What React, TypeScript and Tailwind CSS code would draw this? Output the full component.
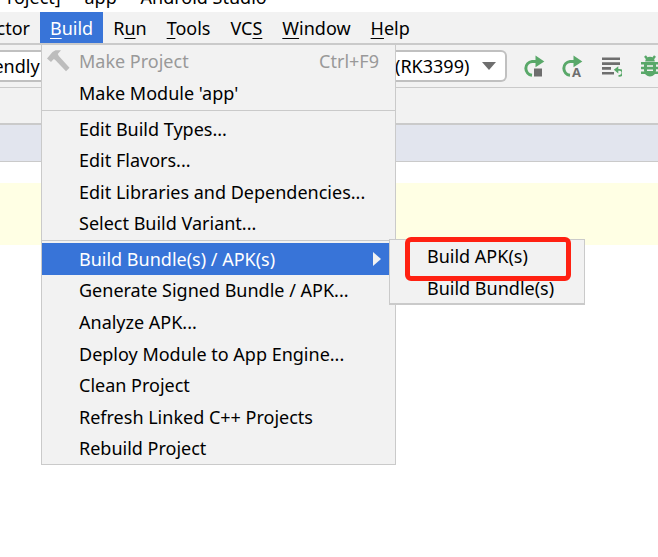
import { clsx } from 'clsx';

type MenuEntry = {
  label: string;
  shortcut?: string;
  disabled?: boolean;
  submenu?: string[];
};

const titleParts = ['Project]', '-', 'app', '-', 'Android Studio'];

const menuGroups: { height: string; entries: MenuEntry[] }[] = [
  {
    height: 'h-16 mb-px',
    entries: [
      { label: 'Make Project', shortcut: 'Ctrl+F9', disabled: true },
      { label: "Make Module 'app'" },
    ],
  },
  {
    height: 'h-[126px] mb-px',
    entries: [
      { label: 'Edit Build Types...' },
      { label: 'Edit Flavors...' },
      { label: 'Edit Libraries and Dependencies...' },
      { label: 'Select Build Variant...' },
    ],
  },
  {
    height: 'h-[221px]',
    entries: [
      { label: 'Build Bundle(s) / APK(s)', submenu: ['Build APK(s)', 'Build Bundle(s)'] },
      { label: 'Generate Signed Bundle / APK...' },
      { label: 'Analyze APK...' },
      { label: 'Deploy Module to App Engine...' },
      { label: 'Clean Project' },
      { label: 'Refresh Linked C++ Projects' },
      { label: 'Rebuild Project' },
    ],
  },
];

function HammerIcon() {
  return (
    <svg className="w-6 h-6" viewBox="0 0 24 24" fill="#bdbdbd" aria-hidden="true">
      <path d="M1 9.5 6.5 3 9.5 1.2H15L11.8 5l1 2L23.5 18.8 20 22.3 8.8 10.5 7.5 10.2 5 13Z" />
    </svg>
  );
}

function RerunArrow() {
  return (
    <>
      <path d="M8 20.3A7 7 0 0 1 8 6.4H12" fill="none" stroke="#59a869" strokeWidth="3" />
      <path d="M11.5.5 20.3 6.4 11.5 12.3Z" fill="#59a869" />
    </>
  );
}

function RestartIcon() {
  return (
    <svg className="w-[22px] h-[22px]" viewBox="0 0 22 22" aria-hidden="true">
      <RerunArrow />
      <path d="M10 13.5h8v8h-8z" fill="#6e6e6e" />
    </svg>
  );
}

function ApplyChangesIcon() {
  return (
    <svg className="w-[22px] h-[22px]" viewBox="0 0 22 22" aria-hidden="true">
      <RerunArrow />
      <text x="10" y="21.5" fontSize="13" fontWeight="700" fill="#6e6e6e" className="font-['Open_Sans',sans-serif]">
        A
      </text>
    </svg>
  );
}

function ApplyCodeIcon() {
  return (
    <svg className="w-[22px] h-[22px]" viewBox="0 0 22 22" aria-hidden="true">
      <path d="M2 2.5h18v2.6H2zM2 7.3h18v2.6H2zM2 12.1h9v2.6H2zM2 16.9h12v2.6H2z" fill="#6e6e6e" />
      <path d="M17 14.8h2.5a3 3 0 0 1 0 6h-1" fill="none" stroke="#59a869" strokeWidth="1.8" />
      <path d="M13.8 14.8 18.3 11.2V18.4Z" fill="#59a869" />
    </svg>
  );
}

function BugIcon() {
  return (
    <svg className="w-[22px] h-[22px]" viewBox="0 0 22 22" aria-hidden="true">
      <path
        d="M7 1 10 5M17 1 14 5M3 8.2H21M3 13H21M3 17.8H21"
        fill="none"
        stroke="#59a869"
        strokeWidth="2.4"
      />
      <path d="M7.2 6.6a4.8 4.8 0 0 1 9.6 0ZM6 8.2h12v7.3a6 6 0 0 1-12 0Z" fill="#59a869" />
      <path d="M9 11h6M9 15.2h6" stroke="#f2f2f2" strokeWidth="1.6" />
    </svg>
  );
}

function Submenu({ items }: { items: string[] }) {
  return (
    <div
      role="menu"
      className="absolute z-20 -top-1 left-[347px] w-[196px] h-[66px] border border-[#cacaca] border-b-2 bg-[#f2f2f2] text-black"
    >
      {items.map((item) => (
        <button key={item} role="menuitem" className="flex items-center w-full h-8 pl-[37px] text-left">
          {item}
        </button>
      ))}
      <div className="absolute -top-[3px] left-[15px] w-[166px] h-11 rounded-md border-5 border-[#ff2112] pointer-events-none" />
    </div>
  );
}

function BuildMenu() {
  return (
    <div
      role="menu"
      className="absolute z-10 left-px top-[33px] w-[355px] border border-t-0 border-[#cacaca] bg-[#f2f2f2]"
    >
      {menuGroups.map((group, i) => (
        <div key={i}>
          {i > 0 && <hr className="border-[#cacaca]" />}
          <div className={clsx('flex flex-col', i > 0 && 'mt-0.5', group.height)}>
            {group.entries.map((entry) => (
              <div key={entry.label} className="relative flex-1 flex">
                <button
                  role="menuitem"
                  disabled={entry.disabled}
                  className={clsx(
                    'flex flex-1 items-center pl-1 pr-4 text-left',
                    entry.disabled && 'text-[#999999]',
                    entry.submenu && 'bg-[#3874d8] text-white'
                  )}
                >
                  <span className="w-[33px]">{entry.disabled && <HammerIcon />}</span>
                  <span className="flex-1">{entry.label}</span>
                  {entry.shortcut && <span>{entry.shortcut}</span>}
                  {entry.submenu && (
                    <svg className="w-2 h-3.5 -mr-0.5" viewBox="0 0 8 14" fill="#f2f2f2" aria-hidden="true">
                      <path d="M0 0 8 7 0 14Z" />
                    </svg>
                  )}
                </button>
                {entry.submenu && <Submenu items={entry.submenu} />}
              </div>
            ))}
          </div>
        </div>
      ))}
    </div>
  );
}

function MenuButton({ before = '', mnemonic = '', after = '', active = false }: {
  before?: string;
  mnemonic?: string;
  after?: string;
  active?: boolean;
}) {
  return (
    <button className={clsx('h-[31px] px-2.5', active && 'bg-[#3874d8] text-white')}>
      {before}
      <span className="underline underline-offset-3">{mnemonic}</span>
      {after}
    </button>
  );
}

export default function App() {
  return (
    <div className="min-h-screen overflow-hidden bg-white text-black text-lg leading-6 font-['Noto_Sans','Open_Sans',sans-serif]">
      <header className="h-3 flex items-end overflow-hidden whitespace-nowrap">
        <h1 className="flex gap-[9px] -ml-1 mb-[3px]">
          {titleParts.map((part, i) => (
            <span key={i}>{part}</span>
          ))}
        </h1>
      </header>

      <nav className="flex h-[33px] bg-[#f2f2f2] border-b-2 border-[#cacaca]">
        <div className="flex w-10 justify-end">
          <MenuButton before="Refactor" />
        </div>
        <div className="relative">
          <MenuButton mnemonic="B" after="uild" active />
          <BuildMenu />
        </div>
        <MenuButton before="R" mnemonic="u" after="n" />
        <MenuButton mnemonic="T" after="ools" />
        <MenuButton before="VC" mnemonic="S" />
        <MenuButton mnemonic="W" after="indow" />
        <MenuButton mnemonic="H" after="elp" />
      </nav>

      <div className="flex items-center h-[43px] bg-[#f2f2f2] border-b border-[#cacaca]">
        <div className="flex w-[507px] h-8 justify-end shrink-0">
          <select
            aria-label="Device"
            className="appearance-none h-8 w-[407px] -ml-8 pl-1 border-y-2 border-[#c0c0c0] bg-white"
          >
            <option>Friendly</option>
          </select>
          <div className="relative">
            <select
              aria-label="Board"
              className="appearance-none h-8 w-[132px] pl-5 border-2 border-l-0 border-[#c0c0c0] rounded-r-md bg-white"
            >
              <option>(RK3399)</option>
            </select>
            <svg
              className="absolute right-[11px] top-3 w-3.5 h-2 pointer-events-none"
              viewBox="0 0 14 8"
              fill="#6e6e6e"
              aria-hidden="true"
            >
              <path d="M0 0h14L7 8Z" />
            </svg>
          </div>
        </div>
        <div className="flex gap-4 ml-[17px]">
          <button aria-label="Restart app">
            <RestartIcon />
          </button>
          <button aria-label="Apply changes">
            <ApplyChangesIcon />
          </button>
          <button aria-label="Apply code changes">
            <ApplyCodeIcon />
          </button>
          <button aria-label="Debug">
            <BugIcon />
          </button>
        </div>
      </div>

      <div className="h-[37px] bg-[#f2f2f2] border-b-2 border-[#cacaca]" />
      <div className="h-[37px] bg-[#e2e5ee] border-b border-[#cacaca]" />
      <main className="pt-[21px]">
        <div className="h-[62px] bg-[#ffffe4]" />
      </main>
    </div>
  );
}
